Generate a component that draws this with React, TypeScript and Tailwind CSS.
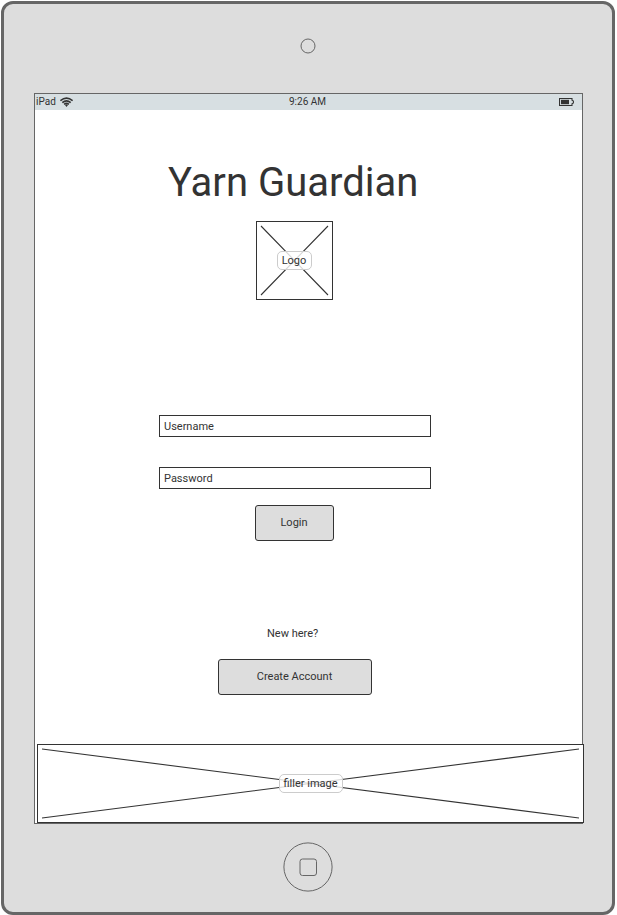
type PlaceholderProps = { label: string; width: number; height: number; className: string; chip: string };

function ImagePlaceholder({ label, width, height, className, chip }: PlaceholderProps) {
  return (
    <div className={`relative flex shrink-0 items-center justify-center border border-[#333] bg-white ${className}`}>
      <svg className="absolute -top-px -left-px" width={width} height={height} stroke="#333" strokeWidth="1.1">
        <path d={`M5 5L${width - 5} ${height - 5}M${width - 5} 5L5 ${height - 5}`} />
      </svg>
      <span
        className={`relative flex h-[19px] items-center justify-center rounded-[5px] border border-[#ccc] bg-white/80 whitespace-nowrap ${chip}`}
      >
        {label}
      </span>
    </div>
  );
}

function WifiIcon() {
  return (
    <svg width="13" height="10" viewBox="0 0 13 10" fill="none" stroke="#333" strokeWidth="1.6">
      <path d="M.4 3.7Q6.5-1.6 12.6 3.7M2.3 5.6Q6.5 2 10.7 5.6M4.1 7.4Q6.5 5.4 8.9 7.4" />
      <path d="M5 8.1L6.5 7.2 8 8.1 6.5 9.9Z" fill="#333" stroke="none" />
    </svg>
  );
}

function BatteryIcon() {
  return (
    <svg width="15" height="8" viewBox="0 0 15 8" fill="none" stroke="#333">
      <path d="M.5.5H13V2.2L14.4 3V5L13 5.8V7.5H.5Z" strokeWidth="1.1" />
      <path d="M2 1.8H10V6.2H2Z" fill="#333" stroke="none" />
    </svg>
  );
}

function StatusBar() {
  return (
    <header className="grid h-4 shrink-0 grid-cols-3 items-center bg-[#d7dfe2] text-[10px] leading-4">
      <div className="flex items-center gap-1 pl-px">
        <span>iPad</span>
        <WifiIcon />
      </div>
      <span className="pr-0.5 text-center">9:26 AM</span>
      <div className="flex justify-end pr-2">
        <BatteryIcon />
      </div>
    </header>
  );
}

export default function App() {
  return (
    <div className="h-[915px] w-[617px] overflow-hidden bg-white pt-px pl-px font-['Roboto',sans-serif] text-[11px] leading-[13px] text-[#333]">
      <div className="flex h-[914px] w-[614px] flex-col items-center rounded-[12px] border-[3px] border-[#666] bg-[#ddd]">
        <svg className="mt-[34px] shrink-0" width="16" height="16" fill="none" stroke="#666">
          <circle cx="8" cy="8" r="7" />
        </svg>
        <main className="mt-[39px] ml-[30px] flex h-[731px] w-[549px] shrink-0 flex-col self-start border border-[#666] bg-white">
          <StatusBar />
          <h1 className="mt-[49px] ml-[133px] h-[48px] text-[40px] leading-[48px] whitespace-nowrap">Yarn Guardian</h1>
          <ImagePlaceholder label="Logo" width={77} height={79} className="mt-[14px] ml-[221px] h-[79px] w-[77px]" chip="w-[35px] pr-px" />
          <form className="mt-[115px] ml-[124px] flex w-[272px] flex-col">
            <input
              aria-label="Username"
              placeholder="Username"
              className="h-[22px] border border-[#333] bg-white px-1 outline-none placeholder:text-[#333]"
            />
            <input
              type="password"
              aria-label="Password"
              placeholder="Password"
              className="mt-[30px] h-[22px] border border-[#333] bg-white px-1 outline-none placeholder:text-[#333]"
            />
            <button type="button" className="mt-4 ml-24 h-9 w-[79px] rounded-[3px] border border-[#333] bg-[#ddd] pr-px pb-0.5">
              Login
            </button>
          </form>
          <p className="mt-[86px] ml-[232px]">New here?</p>
          <button type="button" className="mt-[19px] ml-[183px] h-9 w-[154px] shrink-0 rounded-[3px] border border-[#333] bg-[#ddd] pr-px pb-0.5">
            Create Account
          </button>
          <ImagePlaceholder label="filler image" width={547} height={79} className="mt-[49px] ml-[2px] h-[79px] w-[547px]" chip="w-[64px]" />
        </main>
        <svg className="mt-[18px] shrink-0" width="50" height="50" fill="none" stroke="#666">
          <circle cx="25" cy="25" r="24.1" />
          <rect x="17" y="17" width="16.5" height="16.5" rx="2.5" />
        </svg>
      </div>
    </div>
  );
}
